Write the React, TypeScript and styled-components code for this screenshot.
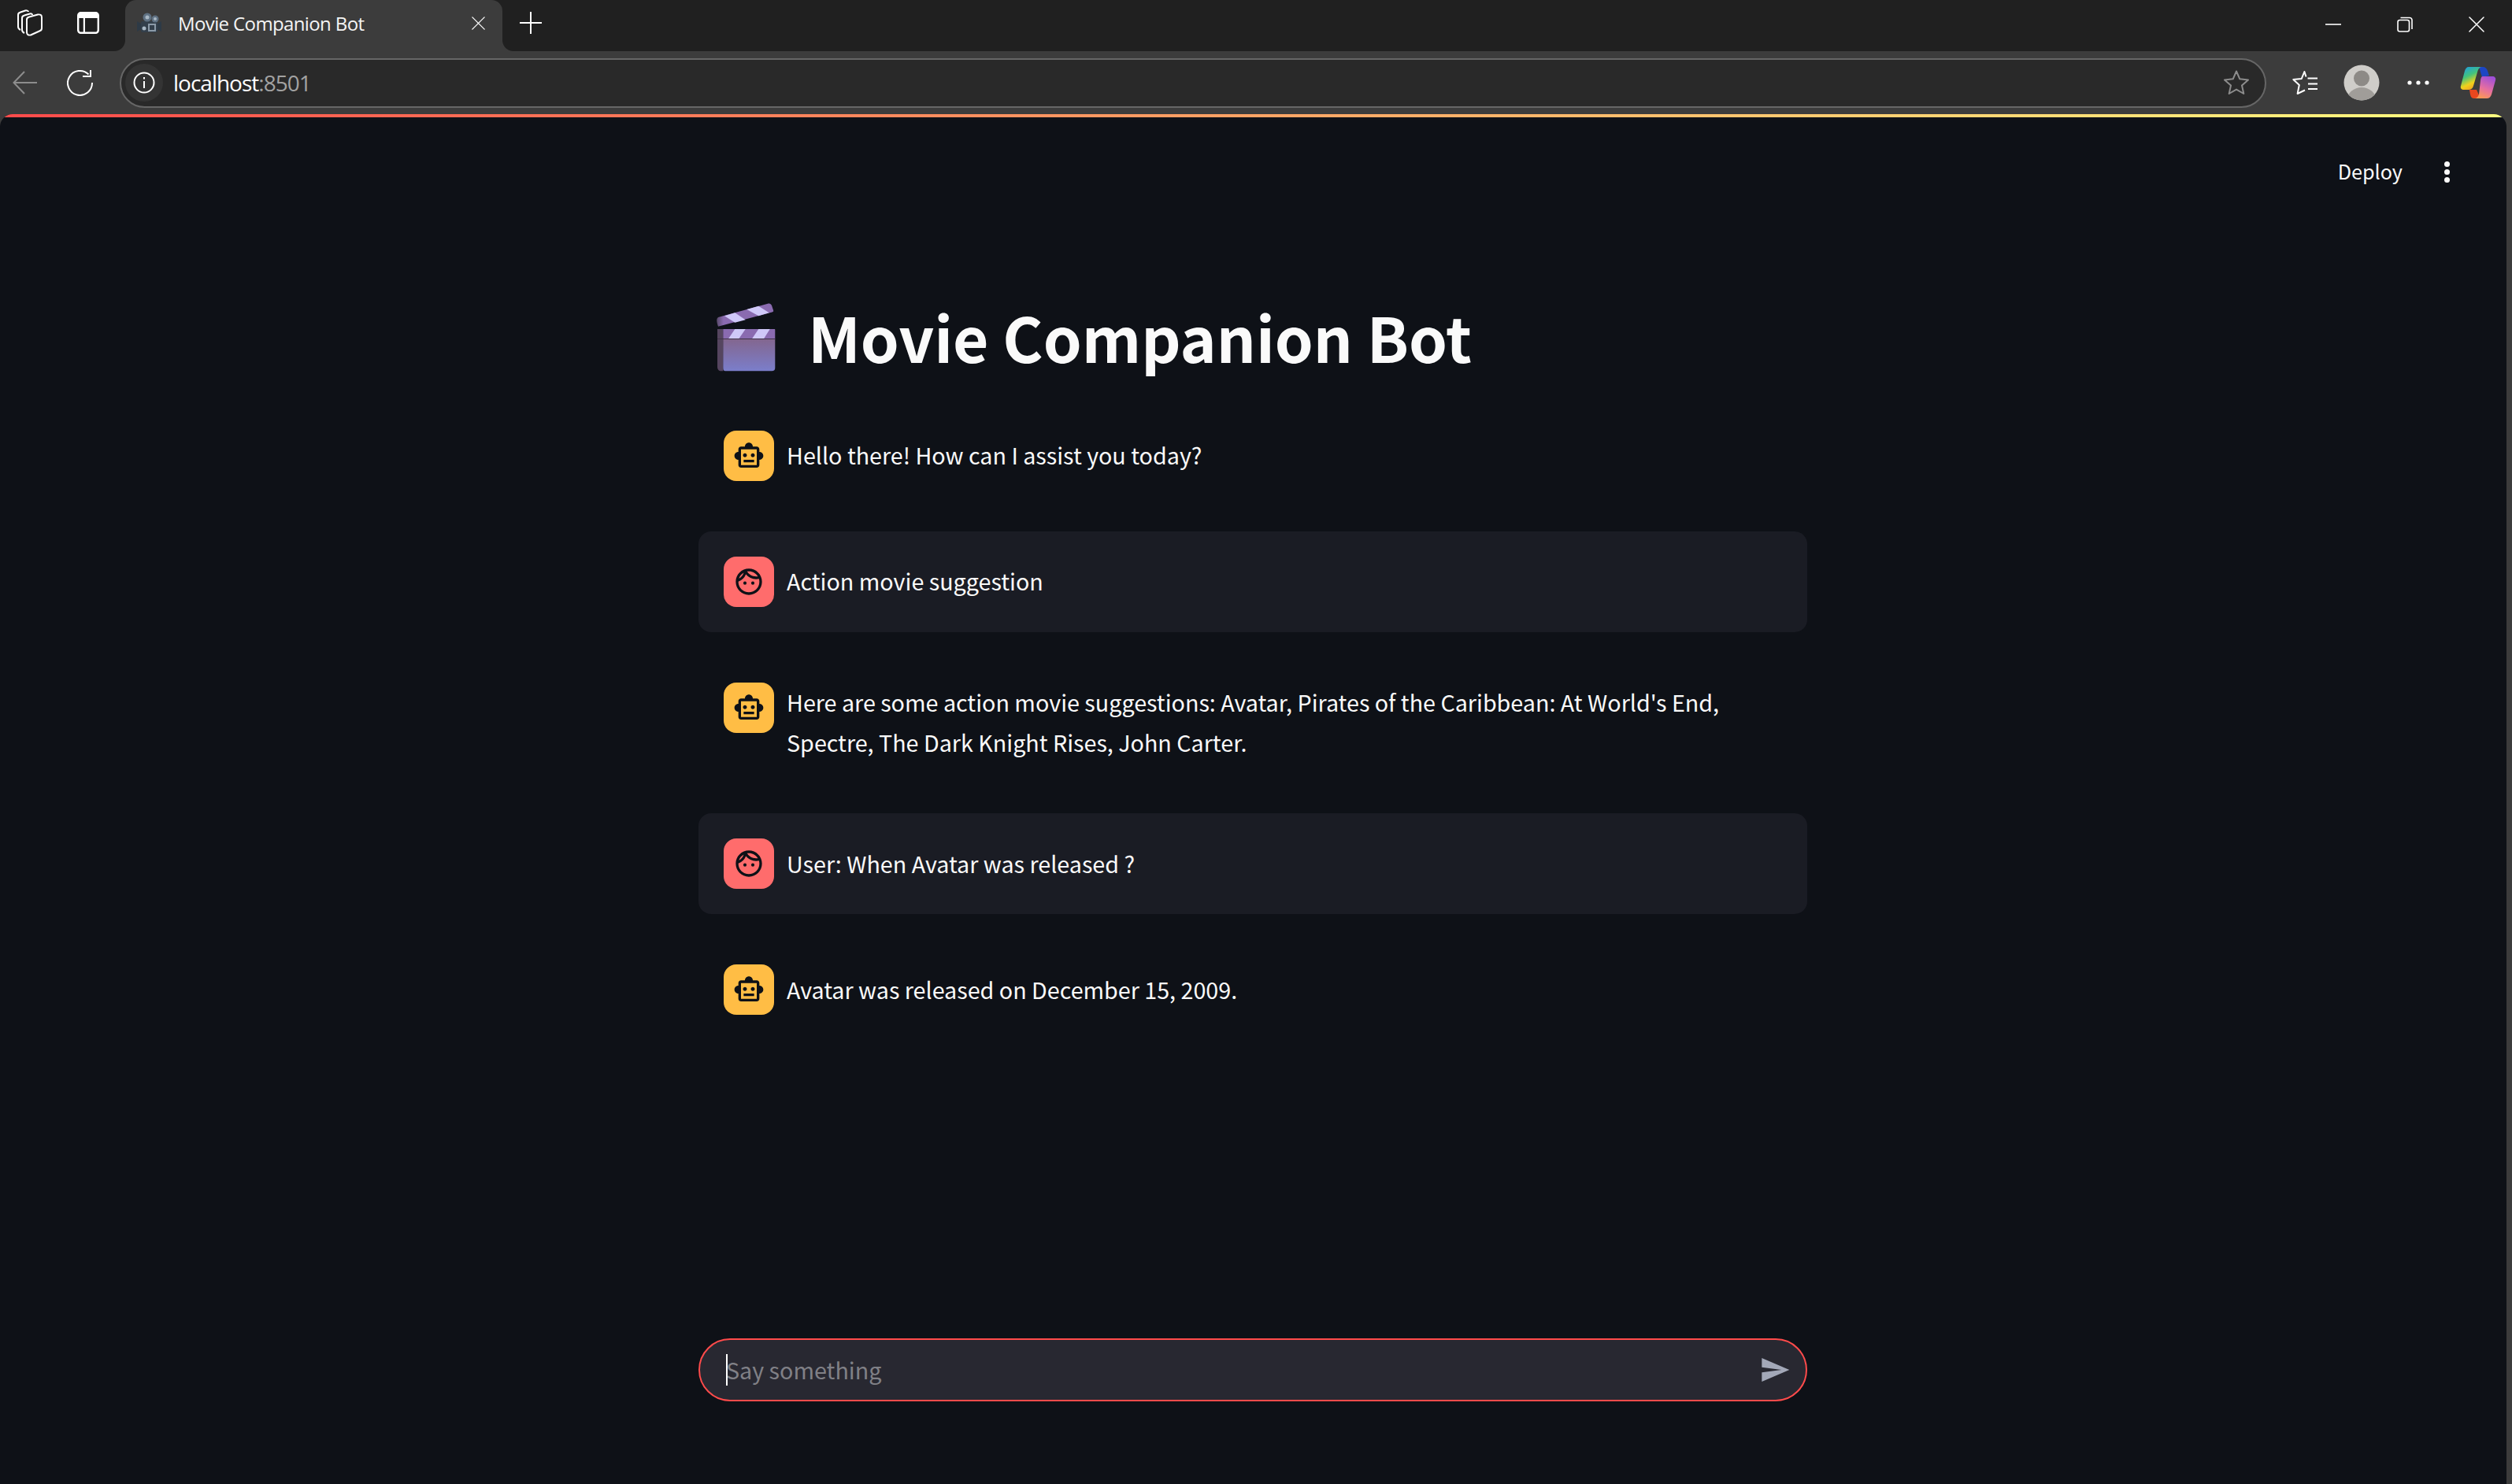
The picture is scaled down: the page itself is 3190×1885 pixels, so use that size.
import styled, { createGlobalStyle } from "styled-components";
import { MdOutlineFace, MdOutlineSmartToy, MdSend } from "react-icons/md";

const GlobalStyle = createGlobalStyle`
  html, body {
    margin: 0;
    padding: 0;
    background: #3c3c3c;
  }
  * { box-sizing: border-box; }
`;

const Window = styled.div`
  width: 3190px;
  height: 1885px;
  display: flex;
  flex-direction: column;
  overflow: hidden;
  background: #3c3c3c;
`;

const TitleBar = styled.div`
  height: 65px;
  flex: none;
  display: flex;
  align-items: stretch;
  padding-left: 1px;
  background: #202020;
`;

const Slot = styled.div<{ $w?: number }>`
  width: ${(p) => p.$w ?? 74}px;
  flex: none;
  display: flex;
  align-items: center;
  justify-content: center;
`;

const TitleSlot = styled(Slot)`
  padding-bottom: 7px;
`;

const ControlSlot = styled(Slot)`
  padding-bottom: 3px;
`;

const Tab = styled.div`
  position: relative;
  width: 479px;
  flex: none;
  margin: 0 0 0 10px;
  padding: 0 22px 7px 15px;
  display: flex;
  align-items: center;
  gap: 21px;
  background: #3c3c3c;
  border-radius: 14px 14px 0 0;

  &::before,
  &::after {
    content: "";
    position: absolute;
    bottom: 0;
    width: 14px;
    height: 14px;
  }
  &::before {
    left: -14px;
    background: radial-gradient(circle at 0 0, #202020 13.5px, #3c3c3c 14.5px);
  }
  &::after {
    right: -14px;
    background: radial-gradient(circle at 100% 0, #202020 13.5px, #3c3c3c 14.5px);
  }
`;

const TabTitle = styled.span`
  flex: 1;
  color: #f4f4f4;
  font: 400 24px "Open Sans", sans-serif;
  letter-spacing: -0.62px;
  white-space: nowrap;
`;

const WindowControls = styled.div`
  margin-left: auto;
  display: flex;
`;

const Toolbar = styled.div`
  height: 80px;
  flex: none;
  display: flex;
  align-items: center;
  background: #3c3c3c;
`;

const AddressBar = styled.div`
  width: 2726px;
  height: 63px;
  flex: none;
  margin: 0 13px 0 13px;
  padding: 0 20px 0 5px;
  display: flex;
  align-items: center;
  background: #292929;
  border: 2px solid #666666;
  border-radius: 32px;
`;

const InfoBubble = styled.div`
  width: 48px;
  height: 48px;
  flex: none;
  display: flex;
  align-items: center;
  justify-content: center;
  background: #343434;
  border-radius: 50%;
`;

const Url = styled.span`
  margin-left: 13px;
  flex: 1;
  color: #ffffff;
  font: 400 28px "Open Sans", sans-serif;
  letter-spacing: -1px;
`;

const UrlPort = styled.span`
  color: #a2a2a2;
`;

const Page = styled.main`
  width: 3183px;
  flex: 1;
  min-height: 0;
  display: flex;
  flex-direction: column;
  background: #0e1117;
  border-radius: 16px 16px 0 0;
  overflow: hidden;
  color: #fafafa;
  font-family: "Noto Sans CJK SC", "Noto Sans", sans-serif;
`;

const Decoration = styled.div`
  height: 4px;
  flex: none;
  background: linear-gradient(90deg, rgb(255, 75, 75), rgb(255, 253, 128));
`;

const Header = styled.header`
  height: 138px;
  flex: none;
  display: flex;
  align-items: center;
  justify-content: flex-end;
  gap: 44px;
  padding-right: 64px;
`;

const DeployLabel = styled.span`
  font-size: 25.2px;
  line-height: 40px;
  margin-top: -2px;
`;

const Kebab = styled.div`
  width: 24px;
  display: flex;
  flex-direction: column;
  align-items: center;
  gap: 3px;

  i {
    width: 7px;
    height: 7px;
    border-radius: 50%;
    background: #fafafa;
  }
`;

const Column = styled.div`
  width: 1408px;
  flex: 1;
  margin-left: 887px;
  display: flex;
  flex-direction: column;
  padding-bottom: 105px;
`;

const Title = styled.h1`
  height: 228px;
  margin: 0;
  padding: 54px 0 0 22px;
  display: flex;
  align-items: center;
  gap: 41px;
  font-size: 78.3px;
  font-weight: 700;
  line-height: 1.2;
`;

const Messages = styled.div`
  display: flex;
  flex-direction: column;
  gap: 32px;
`;

const Message = styled.div<{ $user?: boolean }>`
  display: flex;
  align-items: flex-start;
  gap: 16px;
  padding: 32px;
  border-radius: 16px;
  background: ${(p) => (p.$user ? "#1a1c24" : "transparent")};
`;

const Avatar = styled.div<{ $user?: boolean }>`
  width: 64px;
  height: 64px;
  flex: none;
  display: flex;
  align-items: center;
  justify-content: center;
  border-radius: 16px;
  color: #0e1117;
  background: ${(p) => (p.$user ? "#ff6c6c" : "#ffbd45")};
`;

const MessageText = styled.p`
  min-height: 64px;
  margin: -1px 0 1px;
  display: flex;
  align-items: center;
  font-size: 28.7px;
  line-height: 51.2px;
`;

const ChatInput = styled.div`
  height: 80px;
  margin-top: auto;
  padding: 0 19px 0 33px;
  display: flex;
  align-items: center;
  justify-content: space-between;
  background: #282831;
  border: 2px solid #ff4b4b;
  border-radius: 40px;
`;

const Placeholder = styled.span`
  position: relative;
  color: #808086;
  font-size: 28.7px;
  line-height: 40px;

  &::before {
    content: "";
    position: absolute;
    left: 0;
    top: 0;
    width: 2px;
    height: 40px;
    background: #ffffff;
  }
`;

const SendIcon = styled(MdSend)`
  color: #a3a8b8;
`;

const WorkspaceIcon = () => (
  <svg width="32" height="34" viewBox="0 0 32 34" fill="none" stroke="#fff" strokeWidth="2" strokeLinejoin="round">
    <path d="M4 26C1.8 25 1 24 1 22V7C1 5 2 4 4 3.5L10 1.5C12 1 14 2 14 3" />
    <path d="M9 30C7 29 6 28 6 26V11C6 9 7 8 9 7.5L16 5.5C18 5 19 6 19 7" />
    <path d="M12 13C12 11 13 10 15 9.5L26 6.5C29 6 31 7 31 10V24C31 26 30 27 28 27.5L17 32.5C14 33 12 32 12 29Z" />
  </svg>
);

const SidebarIcon = () => (
  <svg width="30" height="30" viewBox="0 0 30 30">
    <path fill="#fff" d="M6 1H24C27 1 29 3 29 6V24C29 27 27 29 24 29H6C3 29 1 27 1 24V6C1 3 3 1 6 1Z" />
    <path fill="#202020" d="M11 9H26.6V24C26.6 25.7 25.7 26.6 24 26.6H11ZM3.4 9H8.8V26.6H6C4.3 26.6 3.4 25.7 3.4 24Z" />
  </svg>
);

const FavIcon = () => (
  <svg width="31" height="26" viewBox="0 0 31 26">
    <path fill="#2d3a46" d="M0 11L5 14V21L0 24ZM31 11L26 14V21L31 24Z" />
    <rect x="5" y="11" width="21" height="14" rx="2" fill="#333f4b" />
    <circle cx="13" cy="6" r="5.5" fill="#5f7183" />
    <circle cx="13" cy="6" r="2.5" fill="#a9b8c5" />
    <circle cx="23" cy="8" r="4.5" fill="#5f7183" />
    <circle cx="23" cy="8" r="2" fill="#a9b8c5" />
    <circle cx="9" cy="20" r="2.5" fill="#a9b8c5" />
    <rect x="15" y="15" width="8" height="8" fill="none" stroke="#8b9aa8" strokeWidth="2" />
  </svg>
);

const CrossIcon = ({ size }: { size: number }) => (
  <svg width={size} height={size} viewBox="0 0 20 20" stroke="#fff" strokeWidth="1.5" strokeLinecap="round">
    <path d="M1 1L19 19M19 1L1 19" />
  </svg>
);

const PlusIcon = () => (
  <svg width="28" height="28" viewBox="0 0 28 28" stroke="#fff" strokeWidth="2">
    <path d="M14 0V28M0 14H28" />
  </svg>
);

const MinimizeIcon = () => (
  <svg width="20" height="20" viewBox="0 0 20 20" stroke="#fff" strokeWidth="1.6">
    <path d="M0 10H20" />
  </svg>
);

const RestoreIcon = () => (
  <svg width="20" height="20" viewBox="0 0 20 20" fill="none" stroke="#fff" strokeWidth="1.6">
    <rect x="1" y="4.5" width="14.5" height="14.5" rx="2.5" />
    <path d="M4.5 1.5H16C17.6 1.5 19 2.9 19 4.5V16" />
  </svg>
);

const BackIcon = () => (
  <svg width="32" height="30" viewBox="0 0 32 30" fill="none" stroke="#8d8d8d" strokeWidth="2">
    <path d="M31 15H2M15 1L1.5 15L15 29" />
  </svg>
);

const ReloadIcon = () => (
  <svg width="34" height="34" viewBox="0 0 34 34" fill="none" stroke="#fff" strokeWidth="2">
    <path d="M27.5 6.5A15.5 15.5 0 1 0 32 17" />
    <path d="M30 1V9H20" />
  </svg>
);

const InfoIcon = () => (
  <svg width="28" height="28" viewBox="0 0 28 28" fill="none" stroke="#fff" strokeWidth="2">
    <circle cx="14" cy="14" r="12.5" />
    <path d="M14 12V21" />
    <path d="M14 7V9.4" />
  </svg>
);

const StarIcon = () => (
  <svg width="32" height="32" viewBox="0 0 32 32" fill="none" stroke="#8c8c8c" strokeWidth="2" strokeLinejoin="round">
    <path d="M16 1.5L20.3 11.3L31 12.4L23 19.5L25.3 30L16 24.6L6.7 30L9 19.5L1 12.4L11.7 11.3Z" />
  </svg>
);

const FavoritesIcon = () => (
  <svg width="32" height="32" viewBox="0 0 32 32" fill="none" stroke="#fff" strokeWidth="2" strokeLinejoin="round">
    <path d="M17.5 8.5L15.4 2L11.8 10.9L1.3 12L8.8 19L6.6 30L16 25.5" />
    <path d="M19.5 10.5H32M20 17.5H32M20 24H32" />
  </svg>
);

const ProfileIcon = () => (
  <svg width="46" height="46" viewBox="0 0 46 46">
    <defs>
      <clipPath id="profile-clip">
        <circle cx="23" cy="23" r="22.5" />
      </clipPath>
    </defs>
    <circle cx="23" cy="23" r="22.5" fill="#cfcdc9" />
    <circle cx="23" cy="17.5" r="10" fill="#8d8a86" />
    <ellipse cx="23" cy="44" rx="18" ry="15" fill="#a09d99" clipPath="url(#profile-clip)" />
  </svg>
);

const DotsIcon = () => (
  <svg width="28" height="6" viewBox="0 0 28 6" fill="#fff">
    <circle cx="3" cy="3" r="2.6" />
    <circle cx="14" cy="3" r="2.6" />
    <circle cx="25" cy="3" r="2.6" />
  </svg>
);

const CopilotIcon = () => (
  <svg width="46" height="42" viewBox="0 0 46 42">
    <defs>
      <linearGradient id="copilot-left" x1="0.15" y1="0" x2="0.6" y2="1">
        <stop offset="0" stopColor="#1f9de0" />
        <stop offset="0.4" stopColor="#43c47c" />
        <stop offset="0.72" stopColor="#efd21c" />
        <stop offset="1" stopColor="#f49b21" />
      </linearGradient>
      <linearGradient id="copilot-right" x1="0.7" y1="0" x2="0.3" y2="1">
        <stop offset="0" stopColor="#9f4fd8" />
        <stop offset="0.55" stopColor="#e66fa0" />
        <stop offset="1" stopColor="#fb9a52" />
      </linearGradient>
    </defs>
    <path fill="#1c46c4" d="M24 1H29C32 1 34 3 35 6L37 12L28 14Z" />
    <path fill="url(#copilot-left)" d="M11 1H28C25 1 23.5 3 22.5 6L17 25C16 29 13.5 30 10 30H5C2 30 0 28 1 25L6 6C7 3 8.5 1 11 1Z" />
    <path fill="#e9471f" d="M12 30H21L26 41H18C15 41 13.5 39 13 36Z" />
    <path fill="url(#copilot-right)" d="M29 13H41C44 13 46 15 45 18L40 36C39 39 37 41 34 41H18C21 41 23 39 24 36L26 18C26.5 15 27 13 29 13Z" />
  </svg>
);

const ClapperIcon = () => (
  <svg width="76" height="87" viewBox="0 0 76 87">
    <defs>
      <linearGradient id="clapper-body" x1="0" y1="0" x2="0" y2="1">
        <stop offset="0" stopColor="#83668e" />
        <stop offset="1" stopColor="#7b7ecb" />
      </linearGradient>
      <linearGradient id="clapper-stick" x1="0" y1="0" x2="1" y2="0">
        <stop offset="0" stopColor="#594a6b" />
        <stop offset="0.12" stopColor="#8a6bb0" />
        <stop offset="1" stopColor="#8a6bb0" />
      </linearGradient>
    </defs>
    <path fill="url(#clapper-stick)" d="M3 18L66 0.8C68.5 0 70 1 71 3L73 9C73.5 10.5 73 11 71.5 11.5L3 29.7C1.5 25 0 20 3 18Z" />
    <path fill="#cfc8f8" d="M11 16.3L24.3 12.3L37.7 21.3L24.3 24.7ZM39.3 8L54.3 3.7L67.7 12.2L54.3 16.3Z" />
    <path fill="#55455f" d="M2 33H9.3V86.3H7C3.5 86.3 2 84 2 81Z" />
    <path fill="url(#clapper-body)" d="M9.3 45.3H75.3V82C75.3 85 74 86.3 71 86.3H12C10 86.3 9.3 85 9.3 82Z" />
    <path fill="#8a6bb0" d="M9.3 33H74.5C75 33 75.3 33.5 75.3 34V45.3H9.3Z" />
    <path fill="#cfc8f8" d="M24.3 33H37.7L29.3 45.3H16ZM54.3 33H68.7L61 45.3H46Z" />
    <path fill="#3f3346" d="M2 45H75.3V46H2Z" />
  </svg>
);

const App = () => {
  return (
    <Window>
      <GlobalStyle />
      <TitleBar>
        <TitleSlot>
          <WorkspaceIcon />
        </TitleSlot>
        <TitleSlot>
          <SidebarIcon />
        </TitleSlot>
        <Tab>
          <FavIcon />
          <TabTitle>Movie Companion Bot</TabTitle>
          <CrossIcon size={17} />
        </Tab>
        <TitleSlot $w={72}>
          <PlusIcon />
        </TitleSlot>
        <WindowControls>
          <ControlSlot $w={90}>
            <MinimizeIcon />
          </ControlSlot>
          <ControlSlot $w={92}>
            <RestoreIcon />
          </ControlSlot>
          <ControlSlot $w={90}>
            <CrossIcon size={20} />
          </ControlSlot>
        </WindowControls>
      </TitleBar>

      <Toolbar>
        <Slot $w={64}>
          <BackIcon />
        </Slot>
        <Slot $w={75}>
          <ReloadIcon />
        </Slot>
        <AddressBar>
          <InfoBubble>
            <InfoIcon />
          </InfoBubble>
          <Url>
            localhost<UrlPort>:8501</UrlPort>
          </Url>
          <StarIcon />
        </AddressBar>
        <Slot $w={72}>
          <FavoritesIcon />
        </Slot>
        <Slot $w={72}>
          <ProfileIcon />
        </Slot>
        <Slot $w={72}>
          <DotsIcon />
        </Slot>
        <Slot $w={80}>
          <CopilotIcon />
        </Slot>
      </Toolbar>

      <Page>
        <Decoration />
        <Header>
          <DeployLabel>Deploy</DeployLabel>
          <Kebab>
            <i />
            <i />
            <i />
          </Kebab>
        </Header>
        <Column>
          <Title>
            <ClapperIcon />
            Movie Companion Bot
          </Title>
          <Messages>
            <Message>
              <Avatar>
                <MdOutlineSmartToy size={40} />
              </Avatar>
              <MessageText>Hello there! How can I assist you today?</MessageText>
            </Message>
            <Message $user>
              <Avatar $user>
                <MdOutlineFace size={40} />
              </Avatar>
              <MessageText>Action movie suggestion</MessageText>
            </Message>
            <Message>
              <Avatar>
                <MdOutlineSmartToy size={40} />
              </Avatar>
              <MessageText>
                Here are some action movie suggestions: Avatar, Pirates of the Caribbean: At World's End, Spectre, The Dark Knight Rises, John Carter.
              </MessageText>
            </Message>
            <Message $user>
              <Avatar $user>
                <MdOutlineFace size={40} />
              </Avatar>
              <MessageText>User: When Avatar was released ?</MessageText>
            </Message>
            <Message>
              <Avatar>
                <MdOutlineSmartToy size={40} />
              </Avatar>
              <MessageText>Avatar was released on December 15, 2009.</MessageText>
            </Message>
          </Messages>
          <ChatInput>
            <Placeholder>Say something</Placeholder>
            <SendIcon size={40} />
          </ChatInput>
        </Column>
      </Page>
    </Window>
  );
};

export default App;
